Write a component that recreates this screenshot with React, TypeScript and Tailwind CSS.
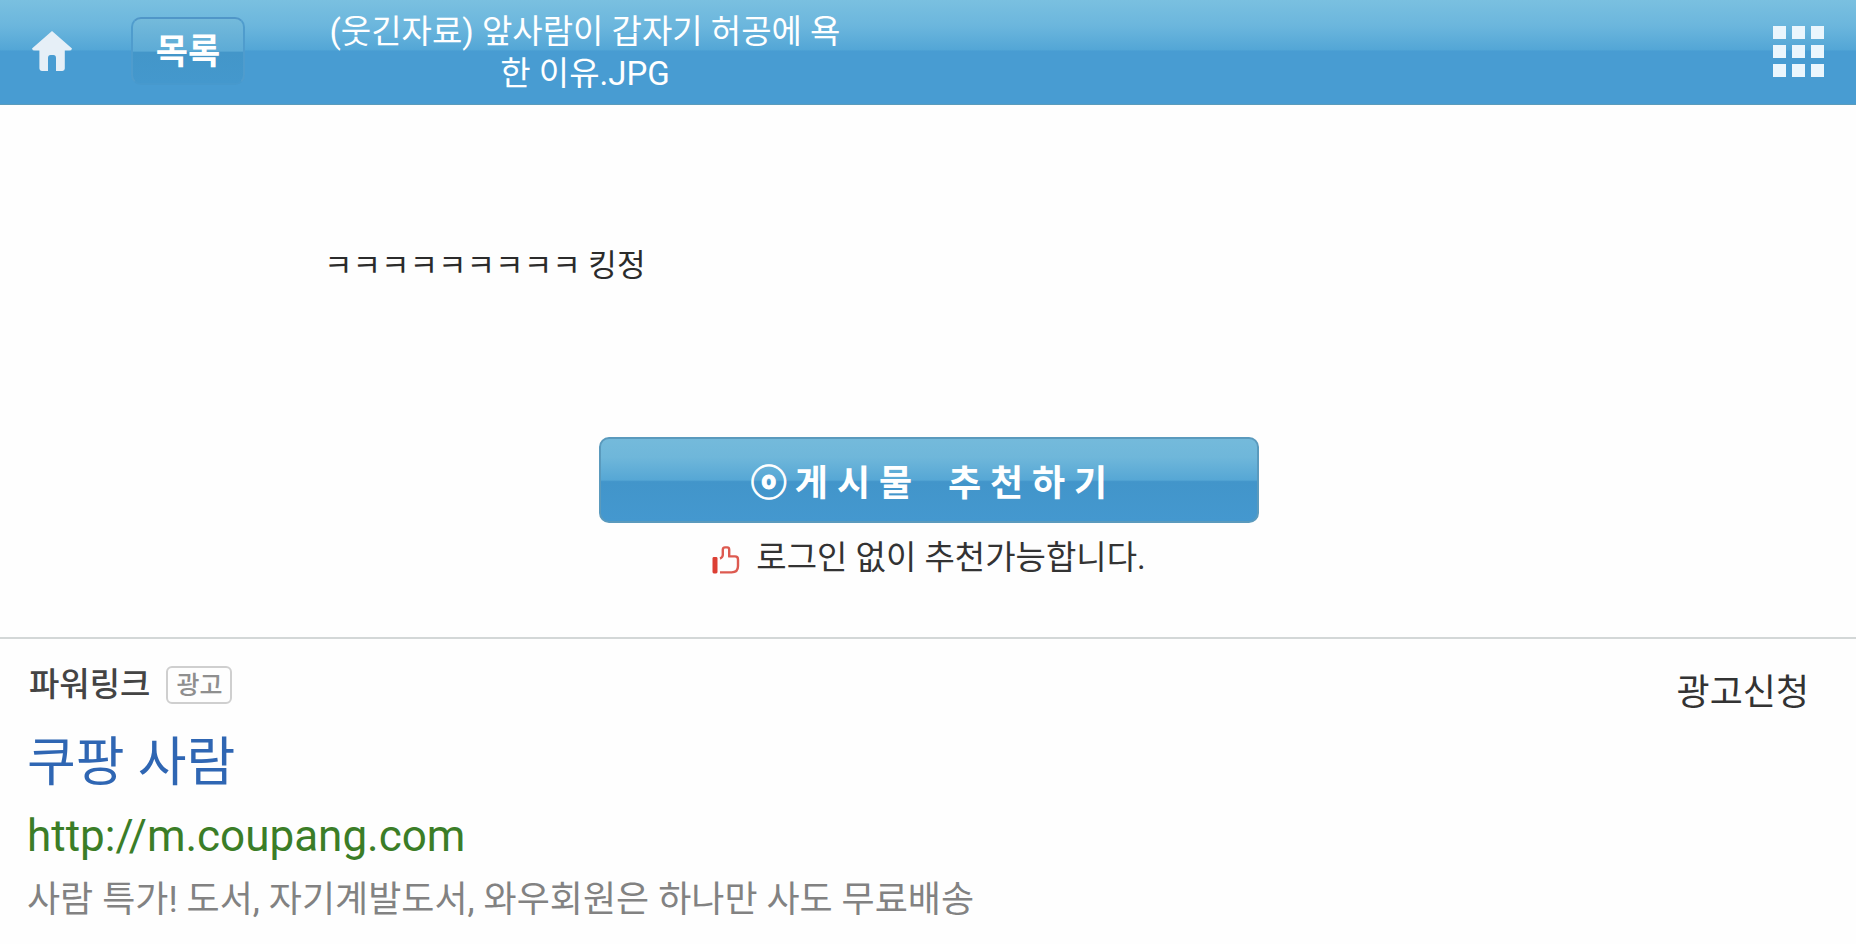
import type { ReactNode } from 'react';

const gridCells = [0, 1, 2, 3, 4, 5, 6, 7, 8];

function HomeIcon() {
  return (
    <svg viewBox="0 0 40 40" className="h-10 w-10" fill="#e6eff7" aria-hidden="true">
      <path d="M20 0 L40 17.4 Q39.6 19.6 37.4 19.6 H32.8 V37.6 Q32.8 40 30.4 40 H24 V27 Q24 24 21.4 24 H18.6 Q16 24 16 27 V40 H9.8 Q7.4 40 7.4 37.6 V19.6 H2.6 Q.4 19.6 0 17.4 Z" />
    </svg>
  );
}

function ThumbIcon() {
  return (
    <svg viewBox="0 0 28 28" className="mt-1 h-7 w-7" aria-hidden="true">
      <rect x="0.5" y="11" width="5" height="16.5" rx="1.4" fill="#dc3f34" />
      <path
        d="M8 12.5 Q10.6 11.6 10.8 9 V3.6 Q11 1.4 13 1.4 H15.2 Q17.2 1.4 17.2 3.6 V10.4 H23 Q26 10.4 26 13.4 V20 Q26 26.4 19.6 26.4 H8"
        fill="none"
        stroke="#dd5a50"
        strokeWidth="2.4"
        strokeLinejoin="round"
      />
    </svg>
  );
}

function AdBadge({ children }: { children: ReactNode }) {
  return (
    <span className="flex h-[38px] items-center rounded-md border-2 border-[#cfcfcf] px-2 text-[25px] font-medium leading-none text-[#8f8f8f]">
      {children}
    </span>
  );
}

function Header() {
  return (
    <header className="flex h-[105px] items-center border-b border-[#5b9cbc] bg-[linear-gradient(180deg,#7ac0e0_0%,#6bb6dd_25%,#53a6d6_48%,#489cd2_49%,#489cd2_100%)] px-8 pb-[2px] text-white">
      <a href="#home" aria-label="홈">
        <HomeIcon />
      </a>
      <button
        type="button"
        className="ml-[59px] h-[68px] w-[114px] rounded-[10px] border-2 border-x-[#4f9ccd] border-b-[#4799cd] border-t-[#5096c8] bg-[linear-gradient(180deg,#74badb_0%,#5dabd6_50%,#4396c9_52%,#4498cd_100%)] pt-1 text-[35px] font-bold"
      >
        목록
      </button>
      <h1 className="ml-20 w-[520px] pt-1 text-center text-[33px] leading-[42px]">
        (웃긴자료) 앞사람이 갑자기 허공에 욕한 이유.JPG
      </h1>
      <button type="button" aria-label="메뉴" className="ml-auto grid grid-cols-3 gap-[6px]">
        {gridCells.map((cell) => (
          <span key={cell} className="h-[13px] w-[13px] bg-[#ebf6fd]" />
        ))}
      </button>
    </header>
  );
}

function Recommend() {
  return (
    <section className="flex flex-col items-center pl-[2px]">
      <button
        type="button"
        className="flex h-[86px] w-[660px] max-w-full items-center justify-center whitespace-pre rounded-[10px] border-2 border-[#5a9abd] bg-[linear-gradient(180deg,#74badb_0%,#6fb7da_22%,#56a7d5_50%,#4295ca_52%,#4498cf_100%)] pt-2 text-[36px] font-bold text-white"
      >
        <span className="mr-2 [-webkit-text-stroke:1px_white]">ⓞ</span>
        게 시 물{'    '}추 천 하 기
      </button>
      <p className="mt-2 flex items-center gap-4 text-[33px] leading-[54px] text-[#333]">
        <ThumbIcon />
        로그인 없이 추천가능합니다.
      </p>
    </section>
  );
}

function PowerLink() {
  return (
    <section className="mt-[52px] border-t-2 border-[#d3d7d7] px-[27px] pt-6">
      <div className="flex items-start justify-between">
        <div className="flex items-center gap-4 pl-[2px]">
          <h2 className="text-[33px] font-medium leading-[44px] text-[#444]">파워링크</h2>
          <AdBadge>광고</AdBadge>
        </div>
        <a href="#apply" className="mr-5 mt-2 text-[36px] leading-[44px] text-[#333]">
          광고신청
        </a>
      </div>
      <a href="#coupang" className="mt-2 block text-[53px] leading-[80px] text-[#2f66b3]">
        쿠팡 사람
      </a>
      <a href="#coupang" className="block text-[44px] leading-[66px] text-[#3b7d27]">
        http://m.coupang.com
      </a>
      <p className="text-[36px] leading-[62px] text-[#828282]">
        사람 특가! 도서, 자기계발도서, 와우회원은 하나만 사도 무료배송
      </p>
    </section>
  );
}

export default function App() {
  return (
    <div className="min-h-screen bg-[#fefefe] font-[Roboto,'Noto_Sans_CJK_KR',sans-serif]">
      <Header />
      <main>
        <p className="px-[324px] pb-[148px] pt-[138px] text-[31px] leading-[46px] text-[#2b2b2b]">
          ㅋㅋㅋㅋㅋㅋㅋㅋㅋ 킹정
        </p>
        <Recommend />
        <PowerLink />
      </main>
    </div>
  );
}
